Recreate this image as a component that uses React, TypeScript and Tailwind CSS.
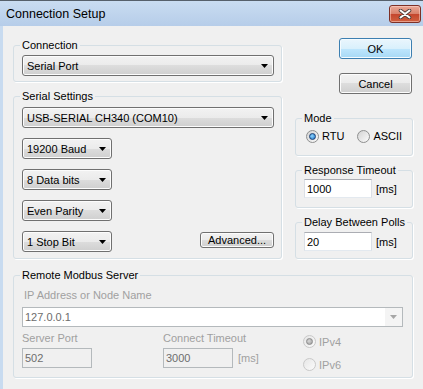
import React from "react";

const btnGrad =
  "bg-[linear-gradient(#f2f2f2_0%,#ebebeb_50%,#dddddd_50%,#cfcfcf_100%)] border border-[#707070] rounded-[3px] shadow-[inset_0_0_0_1px_#fcfcfc]";

function Arrow({ color = "#000" }: { color?: string }) {
  return (
    <svg width="7" height="4" viewBox="0 0 7 4" className="shrink-0">
      <path d="M0 0 H7 L3.5 4 Z" fill={color} />
    </svg>
  );
}

function Select({ label, w }: { label: string; w: string }) {
  return (
    <div className={`${w} h-[21px] ${btnGrad} flex items-center pl-[4px] pr-[5px]`}>
      <span className="flex-1 whitespace-nowrap">{label}</span>
      <Arrow />
    </div>
  );
}

function Button({ label, primary }: { label: string; primary?: boolean }) {
  const cls = primary
    ? "bg-[linear-gradient(#eaf6fd_0%,#d9f0fc_50%,#bee6fd_50%,#a7d9f5_100%)] border border-[#3c7fb1] rounded-[3px] shadow-[inset_0_0_0_1px_#f4fbff]"
    : btnGrad;
  return <div className={`${cls} flex items-center justify-center`}>{label}</div>;
}

function Group({
  title,
  className = "",
  disabled,
  children,
}: {
  title: string;
  className?: string;
  disabled?: boolean;
  children: React.ReactNode;
}) {
  return (
    <fieldset
      className={`border border-[#d5dfe5] rounded-[3px] shadow-[1px_1px_0_#ffffff] min-w-0 ${className}`}
    >
      <legend className={`ml-[-2px] px-[2px] leading-[14px] ${disabled ? "text-black" : ""}`}>{title}</legend>
      {children}
    </fieldset>
  );
}

function Radio({ checked, disabled }: { checked?: boolean; disabled?: boolean }) {
  return (
    <div
      className={`w-[13px] h-[13px] rounded-full border shrink-0 flex items-center justify-center ${
        disabled
          ? "border-[#c9c9c9] bg-[linear-gradient(135deg,#e6e6e6,#fbfbfb)]"
          : "border-[#8e8f8f] bg-[linear-gradient(135deg,#d3d3d3,#fbfbfb)]"
      }`}
    >
      {checked && (
        <div
          className={`w-[7px] h-[7px] rounded-full border ${
            disabled
              ? "border-[#8c8c8c] bg-[radial-gradient(circle_at_40%_40%,#d8d8d8,#9a9a9a)]"
              : "border-[#1a3f74] bg-[radial-gradient(circle_at_40%_40%,#8fd6ff,#1a6fc4)]"
          }`}
        />
      )}
    </div>
  );
}

function TextBox({ value, w }: { value: string; w: string }) {
  return (
    <div
      className={`${w} h-[19px] bg-white border border-t-[#abadb3] border-x-[#dbdfe6] border-b-[#e3e9ef] flex items-center pl-[2px]`}
    >
      {value}
    </div>
  );
}

function DisabledBox({ value, w }: { value: string; w: string }) {
  return (
    <div className={`${w} h-[20px] bg-[#f0f0f0] border border-[#b4b9bc] flex items-center pl-[2px] text-[#6d6d6d]`}>
      {value}
    </div>
  );
}

export default function App() {
  return (
    <div className="w-[423px] h-[389px] overflow-hidden bg-[#c8dbf0] font-['Liberation_Sans',Arial,sans-serif] text-[11px] text-black leading-[14px]">
      {/* title bar */}
      <div className="h-[26px] border-t border-[#56606b] bg-[linear-gradient(#c9dcf1,#b6cde9)] flex items-start">
        <span className="ml-[6px] mt-[6px] text-[12.5px] leading-[15px]">Connection Setup</span>
        <div className="ml-auto mr-[2px] mt-[4px] w-[32px] h-[18px] rounded-[3px] border border-[#7d3026] bg-[linear-gradient(#eaa897_0%,#d8806a_50%,#c4452d_50%,#d0603f_100%)] shadow-[inset_0_0_0_1px_rgba(255,220,210,0.5)] flex items-center justify-center">
          <svg width="14" height="10" viewBox="0 0 14 10">
            <path d="M2.5 1.5 L11.5 8.5 M11.5 1.5 L2.5 8.5" stroke="#4a3a38" strokeWidth="3.6" strokeLinecap="round" />
            <path d="M2.5 1.5 L11.5 8.5 M11.5 1.5 L2.5 8.5" stroke="#ffffff" strokeWidth="2" strokeLinecap="round" />
          </svg>
        </div>
      </div>

      {/* client */}
      <div className="ml-[3px] h-[363px] bg-[#f0f0f0] pl-[10px] pt-[12px]">
        <div className="flex items-start">
          {/* left column */}
          <div className="w-[269px] flex flex-col gap-[7px]">
            <Group title="Connection" className="pl-[8px] pr-[7px] pt-[3px] pb-[5px]">
              <Select label="Serial Port" w="w-full" />
            </Group>
            <Group title="Serial Settings" className="pl-[8px] pr-[7px] pt-[4px] pb-[6px]">
              <div className="flex flex-col gap-[10px]">
                <Select label="USB-SERIAL CH340 (COM10)" w="w-full" />
                <Select label="19200 Baud" w="w-[90px]" />
                <Select label="8 Data bits" w="w-[90px]" />
                <Select label="Even Parity" w="w-[90px]" />
                <div className="flex items-center justify-between">
                  <Select label="1 Stop Bit" w="w-[90px]" />
                  <div className="w-[74px] h-[19px]">
                    <Button label="Advanced..." />
                  </div>
                </div>
              </div>
            </Group>
          </div>

          {/* right column */}
          <div className="ml-[13px] w-[118px] flex flex-col">
            <div className="self-end mr-[1px] w-[73px] h-[21px] flex flex-col [&>div]:h-full">
              <Button label="OK" primary />
            </div>
            <div className="self-end mr-[1px] mt-[14px] w-[73px] h-[21px] flex flex-col [&>div]:h-full">
              <Button label="Cancel" />
            </div>
            <Group title="Mode" className="mt-[17px] pl-[8px] pr-[4px] pt-[4px] pb-[12px]">
              <div className="flex items-center h-[14px] ml-[2px]">
                <Radio checked />
                <span className="ml-[3px]">RTU</span>
                <div className="ml-[13px]">
                  <Radio />
                </div>
                <span className="ml-[3px]">ASCII</span>
              </div>
            </Group>
            <Group title="Response Timeout" className="mt-[7px] pl-[8px] pr-[4px] pt-[2px] pb-[9px]">
              <div className="flex items-center">
                <TextBox value="1000" w="w-[68px]" />
                <span className="ml-[4px]">[ms]</span>
              </div>
            </Group>
            <Group title="Delay Between Polls" className="mt-[7px] pl-[8px] pr-[4px] pt-[3px] pb-[7px]">
              <div className="flex items-center">
                <TextBox value="20" w="w-[68px]" />
                <span className="ml-[4px]">[ms]</span>
              </div>
            </Group>
          </div>
        </div>

        {/* remote */}
        <Group title="Remote Modbus Server" className="mt-[9px] w-[400px] pl-[8px] pr-[9px] pt-[6px] pb-[9px]">
          <div className="ml-[2px] h-[14px] text-[#a0a0a0]">IP Address or Node Name</div>
          <div className="mt-[5px] h-[20px] border border-[#b4b9bc] bg-white flex items-center text-[#6d6d6d]">
            <span className="flex-1 pl-[2px]">127.0.0.1</span>
            <div className="w-[17px] h-full bg-[#f4f4f4] flex items-center justify-center">
              <Arrow color="#a6a6a6" />
            </div>
          </div>
          <div className="mt-[4px] h-[37px] flex items-start">
            <div className="w-[141px] flex flex-col">
              <span className="h-[14px] text-[#a0a0a0]">Server Port</span>
              <div className="mt-[3px]">
                <DisabledBox value="502" w="w-[70px]" />
              </div>
            </div>
            <div className="w-[140px] flex flex-col">
              <span className="h-[14px] text-[#a0a0a0]">Connect Timeout</span>
              <div className="mt-[3px] flex items-center">
                <DisabledBox value="3000" w="w-[70px]" />
                <span className="ml-[5px] text-[#a0a0a0]">[ms]</span>
              </div>
            </div>
            <div className="flex flex-col mt-[4px] gap-[10px]">
              <div className="flex items-center h-[13px]">
                <Radio checked disabled />
                <span className="ml-[3px] text-[#a0a0a0]">IPv4</span>
              </div>
              <div className="flex items-center h-[13px]">
                <Radio disabled />
                <span className="ml-[3px] text-[#a0a0a0]">IPv6</span>
              </div>
            </div>
          </div>
        </Group>
      </div>
    </div>
  );
}
